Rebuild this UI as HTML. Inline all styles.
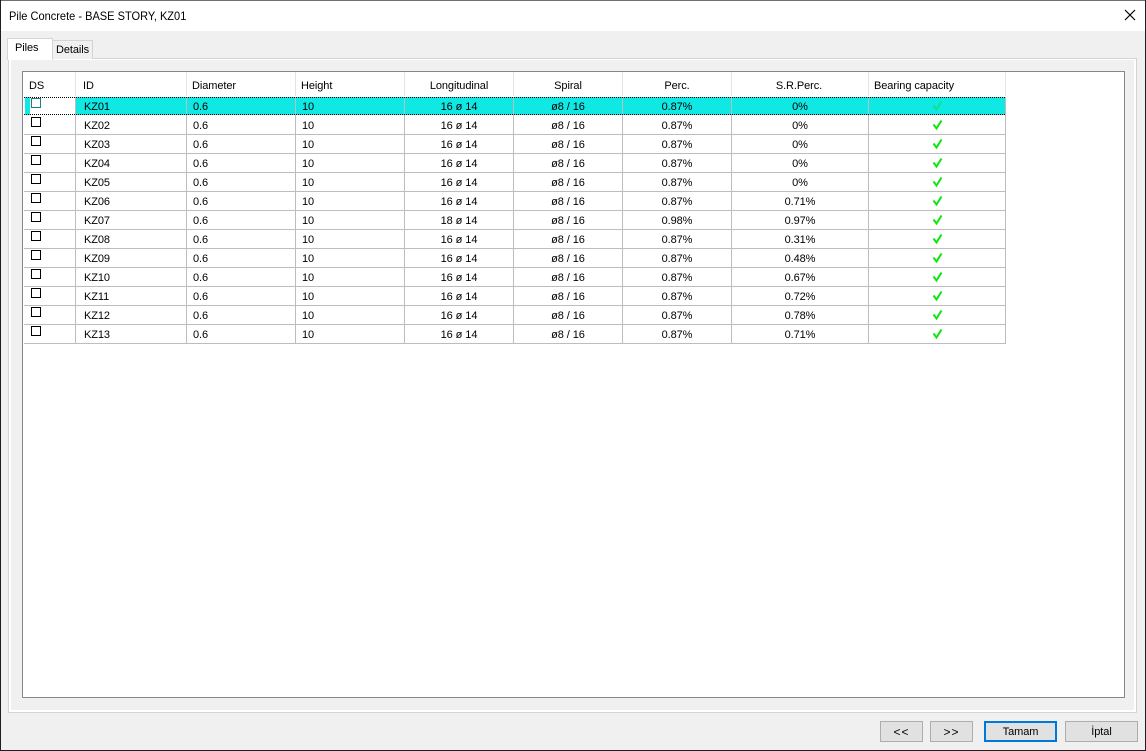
<!DOCTYPE html>
<html><head><meta charset="utf-8"><title>Pile Concrete</title>
<style>
html,body{margin:0;padding:0;width:1146px;height:751px;overflow:hidden;background:#f0f0f0}
body{font-family:"Liberation Sans",sans-serif;font-size:11px;color:#000;position:relative;letter-spacing:-.08px}
div,span,i{position:absolute;box-sizing:border-box}
.t{white-space:nowrap;line-height:14px;height:14px;transform-origin:left center}
.c{text-align:center;width:100px}
.h{top:79px}
.hl{top:72px;height:24px;width:1px;background:#e4e4e4}
.vl{top:97px;height:247px;width:1px;background:#bdbdbd}
.rl{left:24px;width:982px;height:1px;background:#bdbdbd}
.cb{left:31px;width:10px;height:10px;border:1px solid #000;background:#fff}
.btn{top:721px;height:21px;background:#e1e1e1;border:1px solid #adadad;text-align:center;line-height:21px;font-size:11px}
.r div{position:absolute;white-space:nowrap;line-height:14px;height:14px}
.r{position:absolute;left:0;width:1146px;height:19px}
.a{left:84px;top:3px}.b{left:193px;top:3px}.d{left:302px;top:3px}
.e{left:409px;width:100px;text-align:center;top:3px}
.f{left:518px;width:100px;text-align:center;top:3px}
.g{left:627px;width:100px;text-align:center;top:3px}
.i{left:750px;width:100px;text-align:center;top:3px}
.k{position:absolute;left:932px;top:3px}
</style></head><body>
<div style="left:0;top:0;width:1146px;height:751px;background:#f0f0f0"></div>
<div style="left:0;top:1px;width:1146px;height:30px;background:#fff"></div>
<div class="t" style="left:9px;top:9px;font-size:12px;letter-spacing:0;transform:scaleX(.92)">Pile Concrete - BASE STORY, KZ01</div>
<svg style="position:absolute;left:1124px;top:9px" width="12" height="12"><path d="M1 1L11 11M11 1L1 11" stroke="#000" stroke-width="1.2" fill="none"/></svg>

<div style="left:8px;top:58px;width:1129px;height:655px;border:1px solid #d4d4d4;background:#f0f0f0"></div>
<div style="left:9px;top:59px;width:1127px;height:653px;border:2px solid #fff;border-top-width:1px;background:#f0f0f0"></div>
<div style="left:7px;top:38px;width:46px;height:22px;border:1px solid #d4d4d4;border-bottom:0;background:#fff"></div>
<div class="t" style="left:15px;top:41px;font-size:11px">Piles</div>
<div style="left:52px;top:40px;width:41px;height:19px;border:1px solid #d4d4d4;border-bottom:0;background:#f0f0f0"></div>
<div class="t" style="left:56px;top:43px">Details</div>

<div style="left:22px;top:71px;width:1103px;height:627px;border:1px solid #828790;background:#fff"></div>

<i class="hl" style="left:75px"></i><i class="hl" style="left:186px"></i><i class="hl" style="left:295px"></i><i class="hl" style="left:404px"></i><i class="hl" style="left:513px"></i><i class="hl" style="left:622px"></i><i class="hl" style="left:731px"></i><i class="hl" style="left:868px"></i><i class="hl" style="left:1005px"></i>
<div class="t h" style="left:29px">DS</div>
<div class="t h" style="left:83px">ID</div>
<div class="t h" style="left:192px">Diameter</div>
<div class="t h" style="left:301px">Height</div>
<div class="t h c" style="left:409px">Longitudinal</div>
<div class="t h c" style="left:518px">Spiral</div>
<div class="t h c" style="left:627px">Perc.</div>
<div class="t h c" style="left:749px">S.R.Perc.</div>
<div class="t h" style="left:874px">Bearing capacity</div>

<div style="left:76px;top:97px;width:930px;height:18px;background:#10e8e4"></div>
<div style="left:25px;top:97px;width:5px;height:18px;background:#10e8e4"></div>

<i class="rl" style="top:134px"></i><i class="rl" style="top:153px"></i><i class="rl" style="top:172px"></i><i class="rl" style="top:191px"></i><i class="rl" style="top:210px"></i><i class="rl" style="top:229px"></i><i class="rl" style="top:248px"></i><i class="rl" style="top:267px"></i><i class="rl" style="top:286px"></i><i class="rl" style="top:305px"></i><i class="rl" style="top:324px"></i><i class="rl" style="top:343px"></i>
<i class="vl" style="left:75px"></i><i class="vl" style="left:186px"></i><i class="vl" style="left:295px"></i><i class="vl" style="left:404px"></i><i class="vl" style="left:513px"></i><i class="vl" style="left:622px"></i><i class="vl" style="left:731px"></i><i class="vl" style="left:868px"></i><i class="vl" style="left:1005px"></i>

<div style="left:24px;top:97px;width:982px;height:1px;background:repeating-linear-gradient(90deg,#000 0 1px,transparent 1px 2px)"></div>
<div style="left:24px;top:114px;width:982px;height:1px;background:repeating-linear-gradient(90deg,#000 0 1px,transparent 1px 2px)"></div>

<i class="cb" style="top:98px;border-color:#1a8080"></i><i class="cb" style="top:117px"></i><i class="cb" style="top:136px"></i><i class="cb" style="top:155px"></i><i class="cb" style="top:174px"></i><i class="cb" style="top:193px"></i><i class="cb" style="top:212px"></i><i class="cb" style="top:231px"></i><i class="cb" style="top:250px"></i><i class="cb" style="top:269px"></i><i class="cb" style="top:288px"></i><i class="cb" style="top:307px"></i><i class="cb" style="top:326px"></i>

<div class="r" style="top:97px"><div class="a">KZ01</div><div class="b">0.6</div><div class="d">10</div><div class="e">16 ø 14</div><div class="f">ø8 / 16</div><div class="g">0.87%</div><div class="i">0%</div><svg class="k" width="12" height="13"><path d="M1.5 5.5L4.5 9.5L9.5 1.5" stroke="#10e090" stroke-width="2" fill="none"/></svg></div>
<div class="r" style="top:116px"><div class="a">KZ02</div><div class="b">0.6</div><div class="d">10</div><div class="e">16 ø 14</div><div class="f">ø8 / 16</div><div class="g">0.87%</div><div class="i">0%</div><svg class="k" width="12" height="13"><path d="M1.5 5.5L4.5 9.5L9.5 1.5" stroke="#0be60b" stroke-width="2" fill="none"/></svg></div>
<div class="r" style="top:135px"><div class="a">KZ03</div><div class="b">0.6</div><div class="d">10</div><div class="e">16 ø 14</div><div class="f">ø8 / 16</div><div class="g">0.87%</div><div class="i">0%</div><svg class="k" width="12" height="13"><path d="M1.5 5.5L4.5 9.5L9.5 1.5" stroke="#0be60b" stroke-width="2" fill="none"/></svg></div>
<div class="r" style="top:154px"><div class="a">KZ04</div><div class="b">0.6</div><div class="d">10</div><div class="e">16 ø 14</div><div class="f">ø8 / 16</div><div class="g">0.87%</div><div class="i">0%</div><svg class="k" width="12" height="13"><path d="M1.5 5.5L4.5 9.5L9.5 1.5" stroke="#0be60b" stroke-width="2" fill="none"/></svg></div>
<div class="r" style="top:173px"><div class="a">KZ05</div><div class="b">0.6</div><div class="d">10</div><div class="e">16 ø 14</div><div class="f">ø8 / 16</div><div class="g">0.87%</div><div class="i">0%</div><svg class="k" width="12" height="13"><path d="M1.5 5.5L4.5 9.5L9.5 1.5" stroke="#0be60b" stroke-width="2" fill="none"/></svg></div>
<div class="r" style="top:192px"><div class="a">KZ06</div><div class="b">0.6</div><div class="d">10</div><div class="e">16 ø 14</div><div class="f">ø8 / 16</div><div class="g">0.87%</div><div class="i">0.71%</div><svg class="k" width="12" height="13"><path d="M1.5 5.5L4.5 9.5L9.5 1.5" stroke="#0be60b" stroke-width="2" fill="none"/></svg></div>
<div class="r" style="top:211px"><div class="a">KZ07</div><div class="b">0.6</div><div class="d">10</div><div class="e">18 ø 14</div><div class="f">ø8 / 16</div><div class="g">0.98%</div><div class="i">0.97%</div><svg class="k" width="12" height="13"><path d="M1.5 5.5L4.5 9.5L9.5 1.5" stroke="#0be60b" stroke-width="2" fill="none"/></svg></div>
<div class="r" style="top:230px"><div class="a">KZ08</div><div class="b">0.6</div><div class="d">10</div><div class="e">16 ø 14</div><div class="f">ø8 / 16</div><div class="g">0.87%</div><div class="i">0.31%</div><svg class="k" width="12" height="13"><path d="M1.5 5.5L4.5 9.5L9.5 1.5" stroke="#0be60b" stroke-width="2" fill="none"/></svg></div>
<div class="r" style="top:249px"><div class="a">KZ09</div><div class="b">0.6</div><div class="d">10</div><div class="e">16 ø 14</div><div class="f">ø8 / 16</div><div class="g">0.87%</div><div class="i">0.48%</div><svg class="k" width="12" height="13"><path d="M1.5 5.5L4.5 9.5L9.5 1.5" stroke="#0be60b" stroke-width="2" fill="none"/></svg></div>
<div class="r" style="top:268px"><div class="a">KZ10</div><div class="b">0.6</div><div class="d">10</div><div class="e">16 ø 14</div><div class="f">ø8 / 16</div><div class="g">0.87%</div><div class="i">0.67%</div><svg class="k" width="12" height="13"><path d="M1.5 5.5L4.5 9.5L9.5 1.5" stroke="#0be60b" stroke-width="2" fill="none"/></svg></div>
<div class="r" style="top:287px"><div class="a">KZ11</div><div class="b">0.6</div><div class="d">10</div><div class="e">16 ø 14</div><div class="f">ø8 / 16</div><div class="g">0.87%</div><div class="i">0.72%</div><svg class="k" width="12" height="13"><path d="M1.5 5.5L4.5 9.5L9.5 1.5" stroke="#0be60b" stroke-width="2" fill="none"/></svg></div>
<div class="r" style="top:306px"><div class="a">KZ12</div><div class="b">0.6</div><div class="d">10</div><div class="e">16 ø 14</div><div class="f">ø8 / 16</div><div class="g">0.87%</div><div class="i">0.78%</div><svg class="k" width="12" height="13"><path d="M1.5 5.5L4.5 9.5L9.5 1.5" stroke="#0be60b" stroke-width="2" fill="none"/></svg></div>
<div class="r" style="top:325px"><div class="a">KZ13</div><div class="b">0.6</div><div class="d">10</div><div class="e">16 ø 14</div><div class="f">ø8 / 16</div><div class="g">0.87%</div><div class="i">0.71%</div><svg class="k" width="12" height="13"><path d="M1.5 5.5L4.5 9.5L9.5 1.5" stroke="#0be60b" stroke-width="2" fill="none"/></svg></div>

<div class="btn" style="left:880px;width:43px;font-size:12px;letter-spacing:1px">&lt;&lt;</div>
<div class="btn" style="left:930px;width:43px;font-size:12px;letter-spacing:1px">&gt;&gt;</div>
<div class="btn" style="left:984px;width:73px;border:2px solid #0078d7;line-height:19px">Tamam</div>
<div class="btn" style="left:1065px;width:73px">İptal</div>

<div style="left:0;top:0;width:1146px;height:1px;background:#707070"></div>
<div style="left:0;top:0;width:1px;height:751px;background:#1e1e1e"></div>
<div style="left:1145px;top:0;width:1px;height:751px;background:#1e1e1e"></div>
<div style="left:0;top:750px;width:1146px;height:1px;background:#1e1e1e"></div>
</body></html>
